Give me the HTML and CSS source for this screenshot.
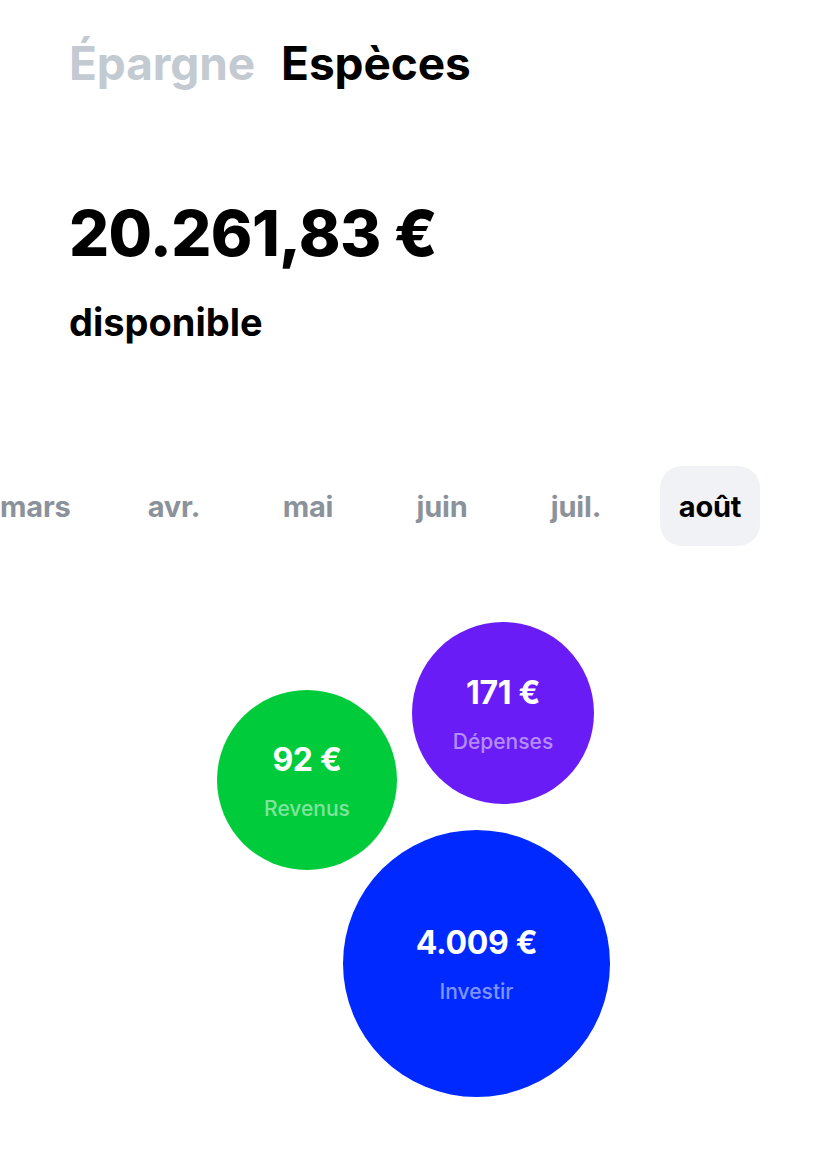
FILE: index.html
```html
<!DOCTYPE html>
<html lang="fr">
<head>
<meta charset="utf-8">
<link rel="stylesheet" href="styles.css">
</head>
<body>
<div class="page">
  <nav class="tabs">
    <span class="tab">Épargne</span>
    <span class="tab active">Espèces</span>
  </nav>
  <section class="balance">
    <div class="amount">20.261,83 €</div>
    <div class="caption">disponible</div>
  </section>
  <div class="months">
    <span class="month">mars</span>
    <span class="month">avr.</span>
    <span class="month">mai</span>
    <span class="month">juin</span>
    <span class="month">juil.</span>
    <span class="month current">août</span>
  </div>
  <div class="bubbles">
    <div class="bubble revenus">
      <span class="value">92 €</span>
      <span class="label">Revenus</span>
    </div>
    <div class="bubble depenses">
      <span class="value">171 €</span>
      <span class="label">Dépenses</span>
    </div>
    <div class="bubble investir">
      <span class="value">4.009 €</span>
      <span class="label">Investir</span>
    </div>
  </div>
</div>
</body>
</html>
```

FILE: styles.css
```css
* { box-sizing: border-box; }
html, body { margin: 0; padding: 0; background: #fff; }
body {
  font-family: Inter, "Noto Sans", "Liberation Sans", sans-serif;
  color: #000;
  width: 828px;
  height: 1153px;
  overflow: hidden;
}
.page { display: flex; flex-direction: column; }

.tabs {
  display: flex;
  gap: 26px;
  padding: 35px 0 0 69px;
}
.tab {
  font-size: 46px;
  font-weight: 700;
  line-height: 56px;
  letter-spacing: -0.1px;
  color: #c3cad2;
}
.tab.active { color: #000; }

.balance {
  padding: 0 0 0 69px;
  margin-top: 104px;
}
.amount {
  font-size: 63px;
  font-weight: 800;
  line-height: 76px;
  letter-spacing: -0.6px;
}
.caption {
  margin-top: 29px;
  font-size: 38px;
  font-weight: 700;
  line-height: 44px;
  letter-spacing: 0;
}

.months {
  display: flex;
  gap: 34px;
  margin-top: 122px;
  margin-left: -10px;
  overflow: hidden;
}
.month {
  flex: 0 0 100px;
  height: 80px;
  display: flex;
  align-items: center;
  justify-content: center;
  font-size: 29px;
  font-weight: 700;
  color: #8b929b;
  border-radius: 22px;
  letter-spacing: -0.2px;
}
.month:first-child { justify-content: flex-start; padding-left: 10px; }
.month.current {
  background: #f1f2f6;
  color: #000;
}

.bubbles {
  position: relative;
  height: 600px;
}
.bubble {
  position: absolute;
  border-radius: 50%;
  display: flex;
  flex-direction: column;
  align-items: center;
  justify-content: center;
  color: #fff;
}
.bubble .value {
  font-size: 32px;
  font-weight: 700;
  line-height: 40px;
  letter-spacing: -0.3px;
}
.bubble .label {
  margin-top: 17px;
  font-size: 21px;
  font-weight: 500;
  line-height: 24px;
  color: rgba(255, 255, 255, 0.5);
}

.revenus {
  background: #00cc3b;
  width: 180px; height: 180px;
  left: 217px; top: 144px;
}
.depenses {
  background: #6a1cf6;
  width: 182px; height: 182px;
  left: 412px; top: 76px;
}
.investir {
  background: #0029ff;
  width: 267px; height: 267px;
  left: 343px; top: 284px;
}
```
